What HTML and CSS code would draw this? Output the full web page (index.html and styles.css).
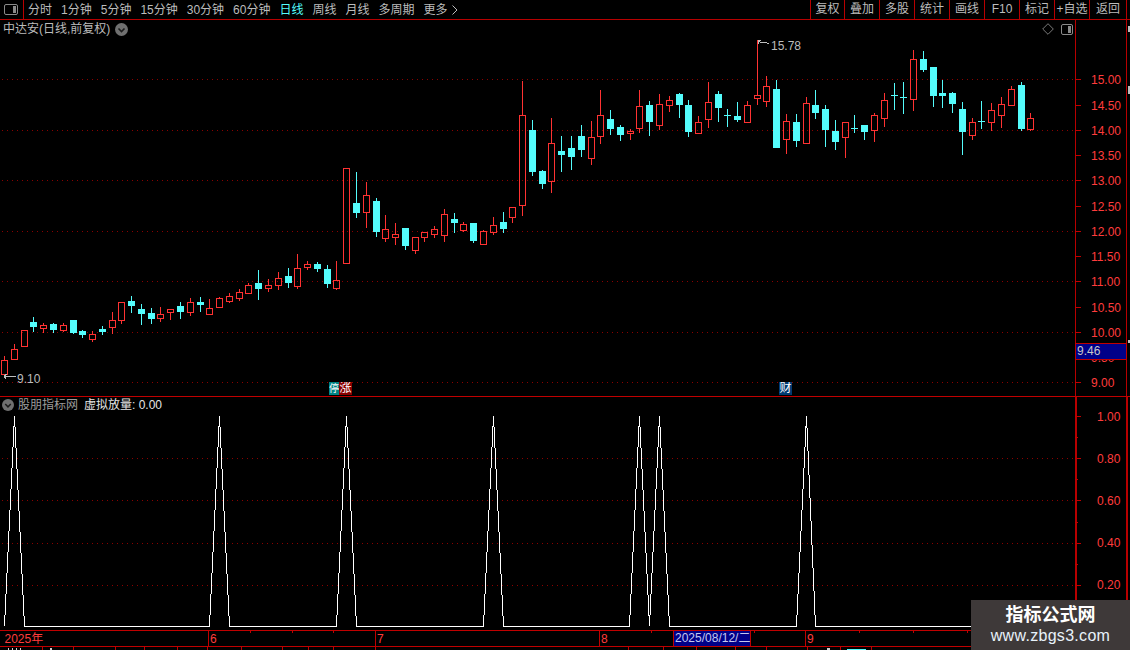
FILE: index.html
```html
<!DOCTYPE html>
<html lang="zh-CN">
<head>
<meta charset="utf-8">
<title>中达安 日线</title>
<link rel="stylesheet" href="styles.css">
</head>
<body>
<div class="app">
  <header class="toolbar">
    <div class="tool-left">
      <span class="panel-btn">
        <svg class="icon-win" width="14" height="11" viewBox="0 0 14 11"><rect x="0.5" y="0.5" width="13" height="10" rx="1.5" class="win-frame"/><rect x="9" y="2" width="3" height="7" class="win-fill"/></svg>
      </span>
      <nav class="periods">
        <span>分时</span><span>1分钟</span><span>5分钟</span><span>15分钟</span><span>30分钟</span><span>60分钟</span>
        <span class="active">日线</span><span>周线</span><span>月线</span><span>多周期</span>
        <span class="more">更多<svg width="6" height="10" viewBox="0 0 6 10"><path d="M0.5 0.5 L5 5 L0.5 9.5" class="chev"/></svg></span>
      </nav>
    </div>
    <div class="tool-right">
      <span>复权</span><span>叠加</span><span>多股</span><span>统计</span><span>画线</span><span>F10</span><span>标记</span><span>+自选</span><span>返回</span>
    </div>
  </header>

  <section class="pane pane-main">
    <svg id="price" class="plot" width="1130" height="376" viewBox="0 20 1130 376">
      <g class="grid">
        <path d="M2 79.5H1075M2 130.5H1075M2 180.5H1075M2 231.5H1075M2 281.5H1075M2 332.5H1075M2 382.5H1075"/>
      </g>
      <path class="axis" d="M1075.5 20V396M1126.5 20V396"/>
      <path class="tick" d="M1075 79.5h6M1075 105.5h6M1075 130.5h6M1075 155.5h6M1075 180.5h6M1075 206.5h6M1075 231.5h6M1075 256.5h6M1075 281.5h6M1075 307.5h6M1075 332.5h6M1075 382.5h6"/>
      <path class="edge" d="M1128 26h2v6h-2zM1128 86h2v8h-2zM1128 340h2v3h-2z"/>
      <g class="axis-labels">
        <text x="1091" y="84">15.00</text><text x="1091" y="110">14.50</text>
        <text x="1091" y="135">14.00</text><text x="1091" y="160">13.50</text>
        <text x="1091" y="185">13.00</text><text x="1091" y="211">12.50</text>
        <text x="1091" y="236">12.00</text><text x="1091" y="261">11.50</text>
        <text x="1091" y="286">11.00</text><text x="1091" y="312">10.50</text>
        <text x="1091" y="337">10.00</text><text x="1091" y="362">9.50</text>
        <text x="1091" y="387">9.00</text>
      </g>
      <g id="candles"></g>
      <path class="pointer" d="M758 41l4 2l3-1l4 2M758 41l3-1M758 41l1 3"/>
      <text class="extreme" x="771" y="50">15.78</text>
      <path class="pointer" d="M4 376h12M4 376l3-2M4 376l2 3"/>
      <text class="extreme" x="17" y="383">9.10</text>
    </svg>
    <div class="title">
      <span>中达安(日线,前复权)</span>
      <svg class="round" width="13" height="13" viewBox="0 0 13 13"><circle cx="6.5" cy="6.5" r="6.5" class="round-bg"/><path d="M3.5 5.5L6.5 8.5L9.5 5.5" class="round-chev"/></svg>
    </div>
    <div class="corner">
      <svg width="12" height="12" viewBox="0 0 12 12"><path d="M6 0.7L11.3 6L6 11.3L0.7 6Z" class="diamond"/></svg>
      <svg width="12" height="11" viewBox="0 0 12 11"><rect x="0.5" y="0.5" width="11" height="10" rx="1.5" class="win-frame"/><rect x="7" y="2" width="3" height="7" class="win-fill"/></svg>
    </div>
    <div class="tag tag-stop">停</div>
    <div class="tag tag-rise">涨</div>
    <div class="tag tag-fin">财</div>
    <div class="price-box">9.46</div>
  </section>

  <section class="pane pane-sub">
    <svg class="plot" width="1130" height="233" viewBox="0 397 1130 233">
      <g class="grid"><path d="M2 458.5H1075M2 500.5H1075M2 543.5H1075M2 585.5H1075"/></g>
      <path class="axis" d="M1075.5 397V630M1076.5 397V630M1126.5 397V630M1127.5 397V630"/>
      <path class="tick" d="M1075 416.5h6M1075 458.5h6M1075 500.5h6M1075 543.5h6M1075 585.5h6M1075 437.5h3M1075 479.5h3M1075 522.5h3M1075 564.5h3M1075 606.5h3"/>
      <g class="axis-labels">
        <text x="1097" y="421">1.00</text><text x="1097" y="463">0.80</text>
        <text x="1097" y="505">0.60</text><text x="1097" y="547">0.40</text>
        <text x="1097" y="589">0.20</text>
      </g>
      <polyline class="spikes" points="4.5,626 14.5,416 24.5,626 209.5,626 219.5,416 229.5,626 336.5,626 346.5,416 356.5,626 483.5,626 493.5,416 503.5,626 629.5,626 639.5,416 649.5,626 659.5,416 669.5,626 796.5,626 806.5,416 815.5,626 1030.5,626"/>
    </svg>
    <div class="title title-sub">
      <svg class="round" width="12" height="12" viewBox="0 0 13 13"><circle cx="6.5" cy="6.5" r="6.5" class="round-bg"/><path d="M3.5 5.5L6.5 8.5L9.5 5.5" class="round-chev"/></svg>
      <span class="sub-name">股朋指标网</span>
      <span class="sub-value">虚拟放量: 0.00</span>
    </div>
  </section>

  <section class="timeline">
    <svg class="plot" width="1130" height="15" viewBox="0 631 1130 15">
      <path class="tick" d="M208.5 631v15M375.5 631v15M599.5 631v15M805.5 631v15M1075.5 631v15M250.5 631v2M292.5 631v2M333.5 631v2M651.5 631v2M754.5 631v2M859.5 631v2M913.5 631v2M967.5 631v2"/>
      <g class="time-labels">
        <text x="4.5" y="643">2025年</text><text x="210" y="643">6</text>
        <text x="377" y="643">7</text><text x="601" y="643">8</text><text x="807" y="643">9</text>
      </g>
    </svg>
    <div class="date-box">2025/08/12/二</div>
  </section>

  <footer class="status">
    <svg class="plot" width="1130" height="3" viewBox="0 647 1130 3">
      <path class="tick" d="M42.5 647v3M73.5 647v3M115.5 647v3M144.5 647v3M177.5 647v3M207.5 647v3M241.5 647v3M282.5 647v3M308.5 647v3M333.5 647v3M375.5 647v3M628.5 647v3M663.5 647v3M696.5 647v3M735.5 647v3M766.5 647v3M807.5 647v3M840.5 647v3M871.5 647v3"/>
      <path class="frag-w" d="M8 648h1v2h-1zM12 648h1v2h-1zM16 648h1v2h-1zM20 648h1v2h-1zM50 648h2v2h-2zM827 648h3v2h-3z"/>
      <path class="frag-c" d="M847 649h19v1h-19z"/>
    </svg>
  </footer>

  <aside class="watermark">
    <div class="wm-title">指标公式网</div>
    <div class="wm-url">www.zbgs3.com</div>
  </aside>
</div>
<script src="chart.js"></script>
</body>
</html>
```

FILE: styles.css
```css
* { box-sizing: border-box; }
html, body { margin: 0; padding: 0; background: #000; }
body { font: 12px/14px "Liberation Sans", "Noto Sans CJK SC", sans-serif; color: #bcbcbc; }
.app { position: relative; width: 1130px; height: 650px; overflow: hidden; background: #000; display: flex; flex-direction: column; }
.plot { display: block; shape-rendering: crispEdges; }

.toolbar { height: 20px; flex: none; display: flex; justify-content: space-between; border-bottom: 1px solid #b80000; }
.tool-left { display: flex; align-items: center; }
.panel-btn { width: 24px; height: 19px; border-right: 1px solid #b80000; display: flex; align-items: center; justify-content: center; }
.icon-win { margin-right: 1px; }
.win-frame { fill: #000; stroke: #8a8a8a; shape-rendering: auto; }
.win-fill { fill: #8a8a8a; }
.periods { display: flex; gap: 9px; padding-left: 4px; }
.periods .active { color: #54fcfc; }
.more { display: flex; align-items: center; gap: 4px; }
.chev { fill: none; stroke: #bcbcbc; stroke-width: 1; shape-rendering: auto; }
.tool-right { display: grid; grid-template-columns: 34px repeat(7, 35px) 38px; padding-right: 3px; }
.tool-right span { border-left: 1px solid #b80000; text-align: center; line-height: 19px; white-space: nowrap; }
.tool-right span:last-child { border-right: 1px solid #b80000; }

.pane { position: relative; flex: none; }
.pane-main { height: 377px; border-bottom: 1px solid #c00000; }
.pane-sub { height: 234px; border-bottom: 1px solid #c00000; }
.grid path { fill: none; stroke: #8c0000; stroke-dasharray: 1 4; shape-rendering: auto; }
.axis { fill: none; stroke: #b80000; }
.tick { fill: none; stroke: #c00000; }
.edge { fill: #bdbdbd; }
.axis-labels text, .time-labels text { fill: #ff3c3c; font-size: 12px; shape-rendering: auto; }
.extreme { fill: #bdbdbd; font-size: 12px; }
.pointer { fill: none; stroke: #bdbdbd; }
.cw { fill: none; stroke: #54fcfc; }
.cb { fill: #54fcfc; }
.rw { fill: none; stroke: #ff3232; }
.spikes { fill: none; stroke: #fff; }

.title { position: absolute; left: 3px; top: 2px; display: flex; align-items: center; gap: 5px; }
.round-bg { fill: #707070; }
.round-chev { fill: none; stroke: #1c1c1c; stroke-width: 1.6; }
.title-sub { left: 2px; top: 1px; gap: 0; }
.sub-name { color: #9c9c9c; margin-left: 4px; }
.sub-value { color: #e6e6e6; margin-left: 6px; }
.corner { position: absolute; left: 1042px; top: 3px; display: flex; align-items: center; gap: 7px; }
.diamond { fill: none; stroke: #7a7a7a; }

.tag { position: absolute; top: 362px; height: 13px; font-size: 12px; line-height: 13px; color: #fff; text-align: center; overflow: hidden; }
.tag-stop { left: 329px; width: 10px; background: #008484; font-size: 10px; }
.tag-rise { left: 339px; width: 13px; background: #8a0000; }
.tag-fin { left: 779px; width: 13px; background: #003a70; }
.price-box { position: absolute; left: 1075px; top: 323px; width: 52px; height: 17px; background: #000088; border: 1px solid #c00000; color: #c8c8c8; line-height: 15px; padding-left: 1px; }

.timeline { position: relative; height: 16px; flex: none; border-bottom: 1px solid #c00000; }
.date-box { position: absolute; left: 673px; top: 0; width: 78px; height: 15px; background: #000088; border: 1px solid #c00000; border-width: 0 1px; color: #c4c8f0; line-height: 15px; padding-left: 1px; white-space: nowrap; }
.status { height: 3px; flex: none; }
.frag-w { fill: #d0d0d0; }
.frag-c { fill: #54fcfc; }

.watermark { position: absolute; left: 971px; top: 600px; width: 159px; height: 50px; background: #3e3939; color: #fff; text-align: center; }
.wm-title { font-size: 18px; line-height: 24px; font-weight: 700; margin-top: 3px; }
.wm-url { font-size: 16px; line-height: 18px; letter-spacing: 0.3px; color: #e8f2fa; }
```

FILE: chart.js
```js
// type, high, body top, body bottom, low (screen y)
var rows = [
['r',356,360,374,377],['r',344,349,359,359],['r',330,330,346,346],['c',317,322,327,332],
['r',323,325,328,333],['c',323,324,330,333],['r',323,325,330,332],['c',320,320,333,334],
['c',330,331,335,338],['r',331,334,339,342],['c',326,329,332,335],['r',312,320,327,334],
['r',302,302,320,324],['c',296,301,306,313],['c',304,309,314,325],['c',308,313,319,324],
['r',307,314,318,322],['r',309,309,312,320],['c',302,306,312,319],['r',298,302,312,316],
['c',297,302,305,312],['r',299,308,314,314],['r',297,298,307,308],['r',293,296,301,303],
['r',289,292,298,301],['r',283,285,293,293],['c',270,283,289,300],['r',279,285,288,292],
['r',272,278,285,290],['c',268,276,283,288],['r',254,268,286,289],['r',261,264,267,270],
['c',262,264,269,272],['c',265,269,284,288],['r',261,280,288,290],['r',168,168,263,263],
['c',172,203,213,218],['r',182,195,212,228],['c',198,201,232,237],['r',215,229,238,242],
['r',223,234,237,245],['c',228,228,246,250],['r',237,237,250,254],['r',232,232,237,242],
['r',226,229,234,238],['r',209,214,235,242],['c',213,219,223,233],['r',222,224,230,232],
['c',223,223,241,243],['r',230,231,244,244],['r',217,225,232,235],['c',212,222,229,233],
['r',207,207,217,223],['r',81,115,205,216],['c',120,130,172,176],['c',170,171,184,189],
['r',118,143,181,193],['c',136,151,155,172],['c',136,148,157,170],['c',125,136,150,157],
['r',121,137,158,165],['r',90,115,136,144],['c',110,119,129,135],['c',125,127,135,141],
['r',129,131,133,140],['r',90,106,128,133],['c',101,105,122,136],['r',94,104,125,130],
['r',96,100,105,112],['c',93,94,105,118],['c',100,105,132,137],['r',116,122,133,134],
['r',82,102,119,128],['c',91,94,108,122],['c',109,115,115,127],['c',102,116,120,122],
['r',101,105,122,123],['r',40,95,98,105],['r',76,86,101,107],['c',80,89,148,148],
['r',114,121,139,154],['c',114,122,141,147],['r',97,103,143,143],['c',90,105,113,119],
['c',105,109,130,147],['c',120,131,142,150],['r',122,122,137,158],['c',115,128,128,133],
['c',125,125,132,140],['r',113,115,130,142],['r',93,100,118,127],['c',83,95,95,110],
['c',82,97,97,114],['r',50,59,99,111],['c',51,59,70,72],['c',67,67,96,107],
['c',80,93,96,108],['c',92,93,104,113],['c',102,109,132,155],['r',118,122,135,140],
['c',101,121,121,129],['r',103,110,122,131],['r',97,104,115,128],['r',86,89,105,105],
['c',82,85,129,131],['r',113,118,129,131]
];
var redPath = '', cyanWick = '', cyanBody = '';
rows.forEach(function (row, i) {
  var col = Math.floor(4.6 + 9.774 * i), x = col + 0.5, hi = row[1], top = row[2], bot = row[3], lo = row[4];
  var wick = (hi < top ? 'M' + x + ' ' + hi + 'V' + top : '') + (lo > bot ? 'M' + x + ' ' + bot + 'V' + lo : '');
  if (row[0] === 'r') {
    redPath += wick + 'M' + (col - 2.5) + ' ' + (top + 0.5) + 'h6V' + (bot + 0.5) + 'h-6Z';
  } else {
    cyanWick += wick;
    cyanBody += 'M' + (col - 3) + ' ' + top + 'h7V' + Math.max(bot, top + 1) + 'h-7Z';
  }
});
var NS = 'http://www.w3.org/2000/svg';
[['rw', redPath], ['cw', cyanWick], ['cb', cyanBody]].forEach(function (p) {
  var el = document.createElementNS(NS, 'path');
  el.setAttribute('class', p[0]);
  el.setAttribute('d', p[1]);
  document.getElementById('candles').appendChild(el);
});
```
